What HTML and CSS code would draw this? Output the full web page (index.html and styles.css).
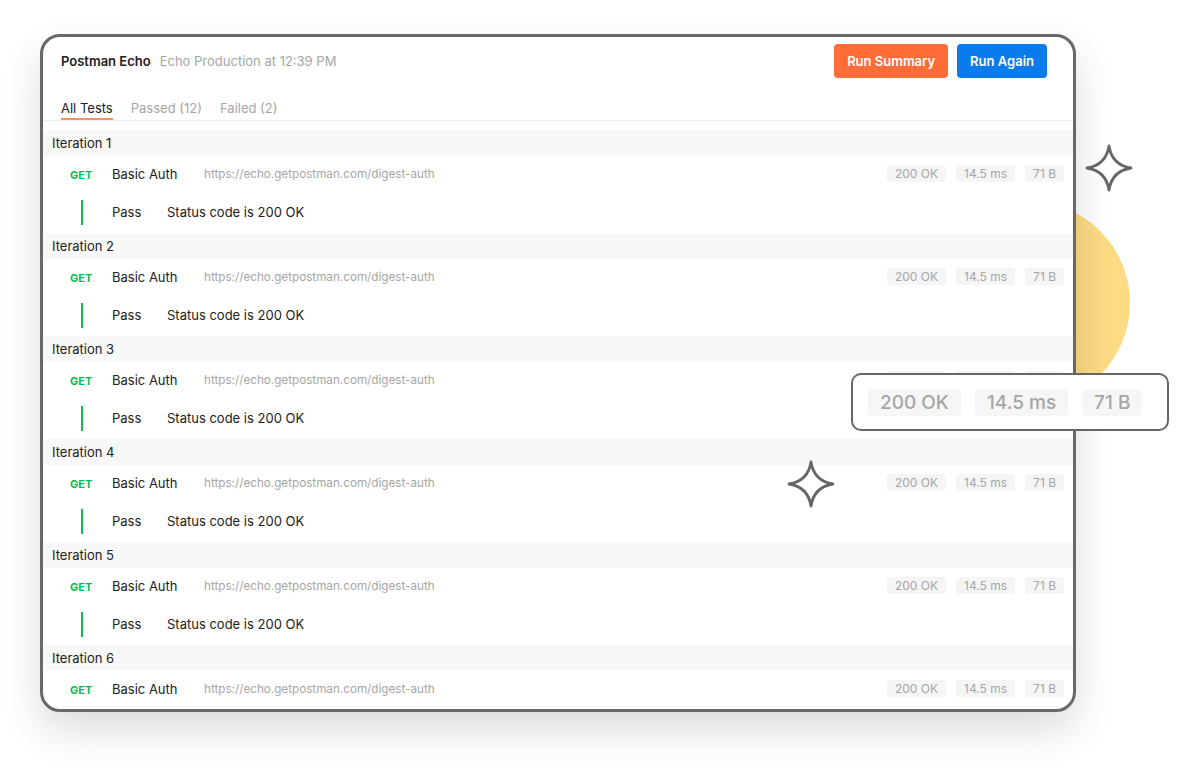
FILE: index.html
```html
<!doctype html>
<html lang="en">
<head>
  <meta charset="utf-8">
  <title>Postman Echo - Run Results</title>
  <link rel="stylesheet" href="styles.css">
</head>
<body>
  <div class="stage">
    <div class="blob"></div>

    <div class="card">
      <div class="card-header">
        <div class="run-title">
          <span class="collection">Postman Echo</span>
          <span class="env">Echo Production at 12:39 PM</span>
        </div>
        <div class="actions">
          <button class="btn btn-summary">Run Summary</button>
          <button class="btn btn-again">Run Again</button>
        </div>
      </div>

      <div class="tabs">
        <span class="tab active">All Tests</span>
        <span class="tab">Passed (12)</span>
        <span class="tab">Failed (2)</span>
      </div>

      <div class="results">
        <div class="iteration">
          <div class="iteration-title">Iteration 1</div>
          <div class="request">
            <span class="method">GET</span>
            <span class="req-name">Basic Auth</span>
            <span class="req-url">https://echo.getpostman.com/digest-auth</span>
            <span class="meta">200 OK</span><span class="meta">14.5 ms</span><span class="meta">71 B</span>
          </div>
          <div class="test">
            <span class="test-bar"></span>
            <span class="test-status">Pass</span>
            <span class="test-name">Status code is 200 OK</span>
          </div>
        </div>

        <div class="iteration">
          <div class="iteration-title">Iteration 2</div>
          <div class="request">
            <span class="method">GET</span>
            <span class="req-name">Basic Auth</span>
            <span class="req-url">https://echo.getpostman.com/digest-auth</span>
            <span class="meta">200 OK</span><span class="meta">14.5 ms</span><span class="meta">71 B</span>
          </div>
          <div class="test">
            <span class="test-bar"></span>
            <span class="test-status">Pass</span>
            <span class="test-name">Status code is 200 OK</span>
          </div>
        </div>

        <div class="iteration">
          <div class="iteration-title">Iteration 3</div>
          <div class="request">
            <span class="method">GET</span>
            <span class="req-name">Basic Auth</span>
            <span class="req-url">https://echo.getpostman.com/digest-auth</span>
            <span class="meta">200 OK</span><span class="meta">14.5 ms</span><span class="meta">71 B</span>
          </div>
          <div class="test">
            <span class="test-bar"></span>
            <span class="test-status">Pass</span>
            <span class="test-name">Status code is 200 OK</span>
          </div>
        </div>

        <div class="iteration">
          <div class="iteration-title">Iteration 4</div>
          <div class="request">
            <span class="method">GET</span>
            <span class="req-name">Basic Auth</span>
            <span class="req-url">https://echo.getpostman.com/digest-auth</span>
            <span class="meta">200 OK</span><span class="meta">14.5 ms</span><span class="meta">71 B</span>
          </div>
          <div class="test">
            <span class="test-bar"></span>
            <span class="test-status">Pass</span>
            <span class="test-name">Status code is 200 OK</span>
          </div>
        </div>

        <div class="iteration">
          <div class="iteration-title">Iteration 5</div>
          <div class="request">
            <span class="method">GET</span>
            <span class="req-name">Basic Auth</span>
            <span class="req-url">https://echo.getpostman.com/digest-auth</span>
            <span class="meta">200 OK</span><span class="meta">14.5 ms</span><span class="meta">71 B</span>
          </div>
          <div class="test">
            <span class="test-bar"></span>
            <span class="test-status">Pass</span>
            <span class="test-name">Status code is 200 OK</span>
          </div>
        </div>

        <div class="iteration">
          <div class="iteration-title">Iteration 6</div>
          <div class="request">
            <span class="method">GET</span>
            <span class="req-name">Basic Auth</span>
            <span class="req-url">https://echo.getpostman.com/digest-auth</span>
            <span class="meta">200 OK</span><span class="meta">14.5 ms</span><span class="meta">71 B</span>
          </div>
        </div>
      </div>
    </div>

    <!-- decorations laid over the card -->
    <svg class="sparkle sparkle-top" viewBox="0 0 48 48" aria-hidden="true">
      <path d="M24 2 Q27 21 46 24 Q27 27 24 46 Q21 27 2 24 Q21 21 24 2 Z"/>
    </svg>
    <svg class="sparkle sparkle-mid" viewBox="0 0 48 48" aria-hidden="true">
      <path d="M24 2 Q27 21 46 24 Q27 27 24 46 Q21 27 2 24 Q21 21 24 2 Z"/>
    </svg>

    <div class="callout">
      <span class="callout-meta">200 OK</span>
      <span class="callout-meta">14.5 ms</span>
      <span class="callout-meta">71 B</span>
    </div>
  </div>
</body>
</html>
```

FILE: styles.css
```css
body {
  margin: 0;
  font-family: 'Inter', 'Roboto', 'Helvetica', sans-serif;
  background-color: #fff;
  color: #212121;
}

.stage {
  position: relative;
  width: 1200px;
  height: 768px;
  padding: 34px 0 0 40px;
  box-sizing: border-box;
  overflow: hidden;
}

.blob {
  position: absolute;
  left: 926px;
  top: 201px;
  width: 204px;
  height: 204px;
  border-radius: 50%;
  background-color: #fddb84;
}

.card {
  position: relative;
  z-index: 1;
  width: 1036px;
  height: 678px;
  box-sizing: border-box;
  border: 3px solid #686868;
  border-radius: 20px;
  background-color: #fff;
  overflow: hidden;
  box-shadow: 0 18px 40px rgba(0, 0, 0, 0.14);
}

/* header */

.card-header {
  display: flex;
  align-items: center;
  justify-content: space-between;
  padding: 7px 26px 0 18px;
  height: 34px;
}

.run-title {
  display: flex;
  align-items: baseline;
  gap: 9px;
  font-size: 13px;
}

.collection {
  font-weight: 600;
  color: #212121;
}

.env {
  color: #a6a6a6;
}

.actions {
  display: flex;
  gap: 9px;
}

.btn {
  height: 34px;
  padding: 0 13px;
  border: 0;
  border-radius: 4px;
  font-family: inherit;
  font-size: 13px;
  font-weight: 600;
  color: #fff;
}

.btn-summary {
  background-color: #ff6c37;
}

.btn-again {
  background-color: #097bed;
}

/* tabs */

.tabs {
  display: flex;
  gap: 18px;
  margin-top: 22px;
  padding: 0 18px;
  height: 20px;
  border-bottom: 1px solid #eeeeee;
  font-size: 13px;
}

.tab {
  color: #a6a6a6;
  line-height: 16px;
}

.tab.active {
  color: #212121;
  border-bottom: 2px solid #fb8f67;
  height: 18px;
}

/* results */

.results {
  margin-top: 9px;
}

.iteration-title {
  height: 26px;
  line-height: 26px;
  padding-left: 9px;
  background-color: #f8f8f8;
  font-size: 13px;
}

.request {
  display: flex;
  align-items: center;
  height: 35px;
  padding: 0 9px 0 27px;
}

.method {
  width: 42px;
  font-size: 11px;
  font-weight: 700;
  color: #0cbb52;
  padding-top: 2px;
}

.req-name {
  width: 92px;
  font-size: 13px;
}

.req-url {
  flex: 1;
  font-size: 11.7px;
  color: #a6a6a6;
}

.meta {
  margin-left: 10px;
  padding: 0 8px;
  height: 17px;
  line-height: 17px;
  border-radius: 3px;
  background-color: #f5f5f5;
  font-size: 12px;
  color: #a6a6a6;
}

.test {
  display: flex;
  align-items: center;
  height: 42px;
  padding-left: 38px;
  font-size: 13px;
}

.test-bar {
  width: 2px;
  height: 25px;
  margin-right: 29px;
  background-color: #0cbb52;
}

.test-status {
  width: 55px;
}

/* overlays */

.sparkle {
  position: absolute;
  z-index: 2;
  width: 48px;
  height: 48px;
}

.sparkle path {
  fill: #fff;
  stroke: #666;
  stroke-width: 2.8;
  stroke-linejoin: round;
}

.sparkle-top {
  left: 1085px;
  top: 144px;
}

.sparkle-mid {
  left: 787px;
  top: 460px;
}

.callout {
  position: absolute;
  z-index: 2;
  left: 851px;
  top: 373px;
  width: 318px;
  height: 58px;
  box-sizing: border-box;
  display: flex;
  align-items: center;
  gap: 14px;
  padding-left: 15px;
  border: 2px solid #666;
  border-radius: 10px;
  background-color: #fff;
}

.callout-meta {
  height: 27px;
  line-height: 27px;
  padding: 0 12px;
  border-radius: 4px;
  background-color: #f6f6f6;
  font-size: 19px;
  font-weight: 500;
  color: #a6a6a6;
}
```
